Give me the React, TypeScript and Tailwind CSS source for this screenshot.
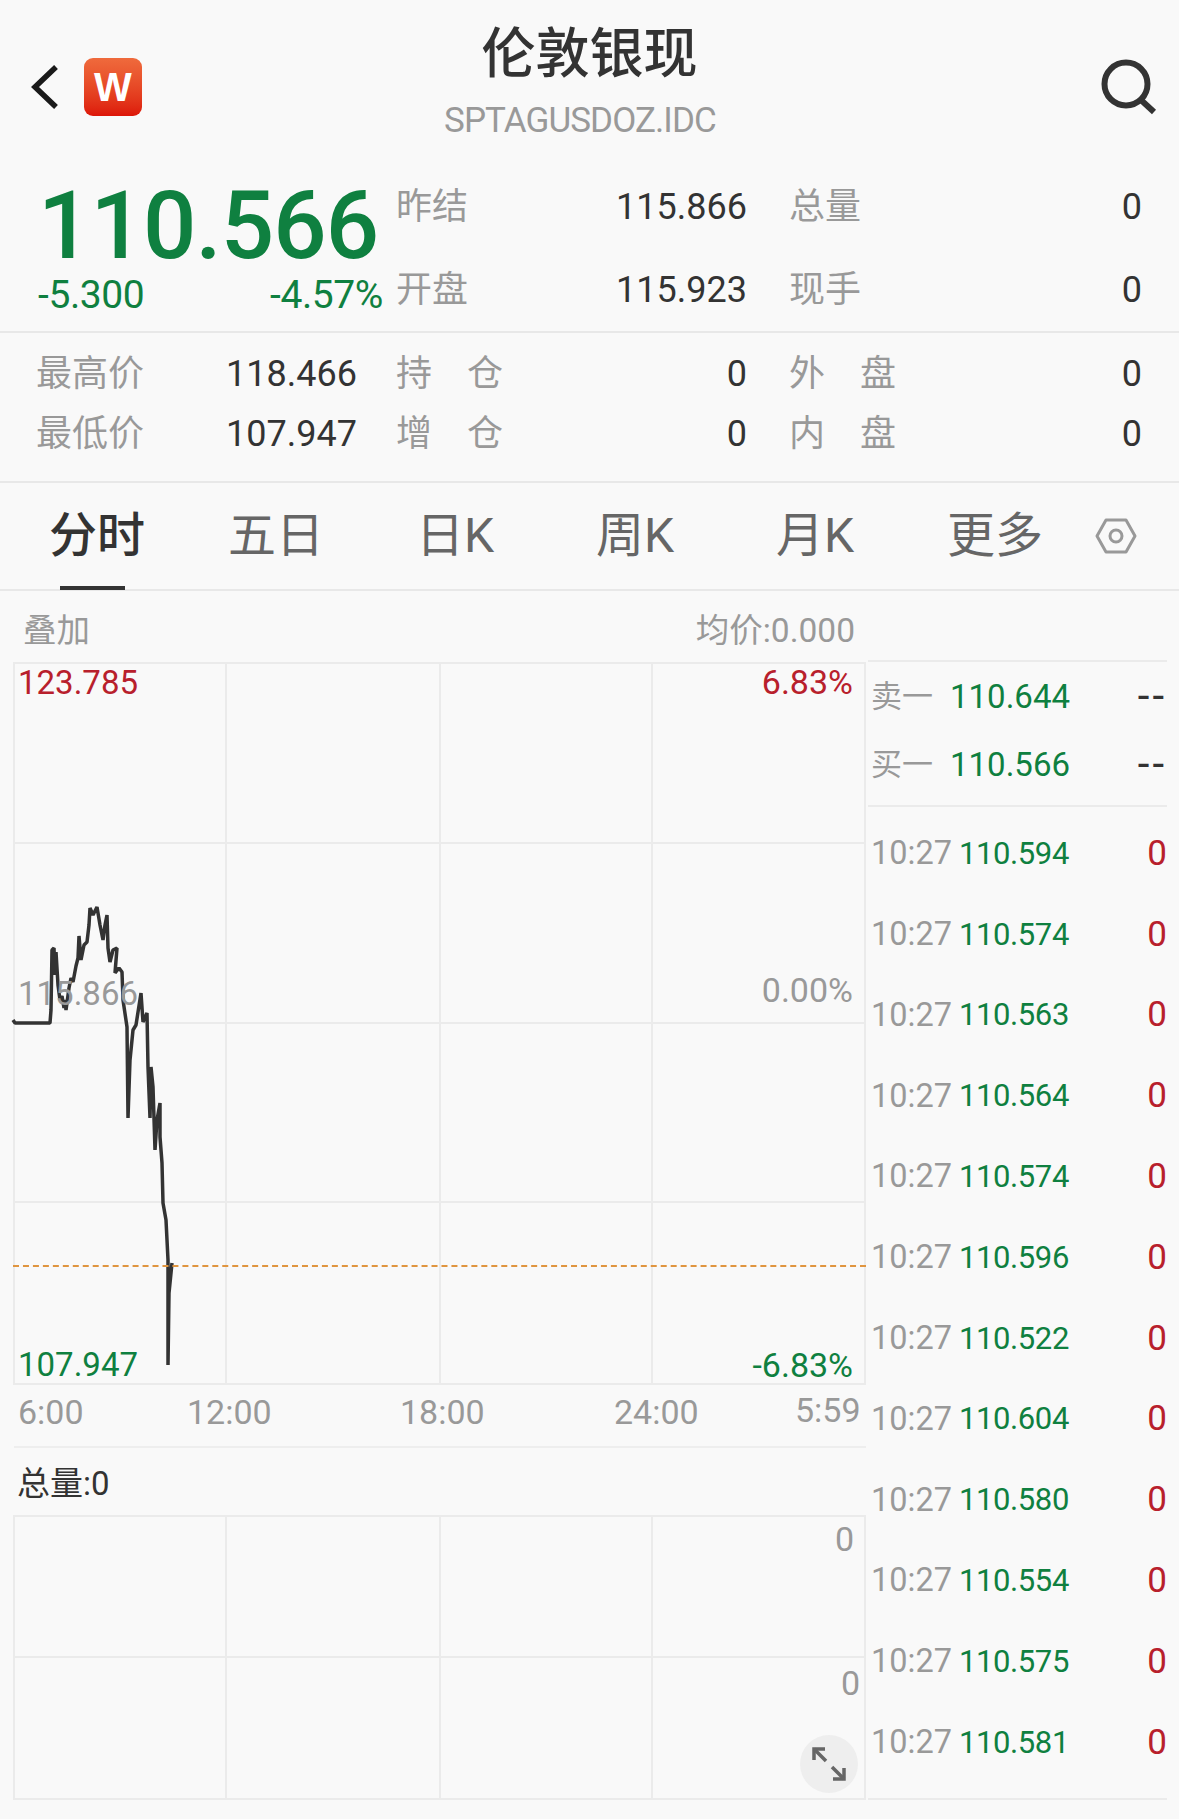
const GREEN = 'text-[#0f8040]';

const chartPoints =
  '13,1020 15,1023 50,1023 51,1010 52,950 54,948 55,975 56,952 58,985 60,1000 62,996 64,1008 65,1000 66,1010 69,988 71,978 73,982 76,966 78,958 79,936 81,960 84,945 87,942 89,925 90,908 93,915 97,907 100,925 103,940 105,925 107,915 108,948 110,962 113,950 117,948 115,973 119,968 122,972 123,1000 127,1027 128,1118 130,1060 133,1030 136,1025 141,993 143,1022 147,1013 148,1067 150,1118 151,1067 153,1087 155,1150 157,1120 160,1103 160,1137 162,1163 163,1203 166,1220 168,1260 168,1365 169,1293 172,1263';

const tradeRows = [
  '110.594', '110.574', '110.563', '110.564', '110.574', '110.596',
  '110.522', '110.604', '110.580', '110.554', '110.575', '110.581',
];

function Cell({ label, value, spaced }: { label: [string, string]; value: string; spaced?: boolean }) {
  return (
    <div className="flex items-center justify-between w-full">
      <span className={`flex text-[#999] text-[36px] ${spaced ? 'w-[107px] justify-between' : ''}`}>
        <span>{label[0]}</span>
        <span>{label[1]}</span>
      </span>
      <span className="text-[#333] text-[36px]">{value}</span>
    </div>
  );
}

function GridBox({ rows, className }: { rows: number; className: string }) {
  const cells = Array.from({ length: rows * 4 });
  return (
    <div
      className={`grid grid-cols-[212px_214px_212px_211px] border-2 border-[#ebebeb] ${rows === 4 ? 'grid-rows-4' : 'grid-rows-2'} ${className}`}
    >
      {cells.map((_, i) => (
        <div
          key={i}
          className={`${i % 4 !== 3 ? 'border-r-2' : ''} ${i < (rows - 1) * 4 ? 'border-b-2' : ''} border-[#ebebeb]`}
        />
      ))}
    </div>
  );
}

export default function App() {
  return (
    <div className="w-[1179px] h-[1819px] overflow-hidden bg-[#f9f9f9] font-['Roboto','Noto_Sans_CJK_SC',sans-serif] leading-none">
      {/* header */}
      <div className="relative h-[165px]">
        <svg className="absolute left-[29px] top-[62px]" width="32" height="50" viewBox="0 0 32 50" fill="none">
          <path d="M27 5 L6 25 L27 45" stroke="#1a1a1a" strokeWidth="5.5" />
        </svg>
        <div className="absolute left-[84px] top-[58px] w-[58px] h-[58px] rounded-[9px] bg-gradient-to-b from-[#ef6a3c] to-[#dd1508] flex items-center justify-center text-white text-[40px] font-bold font-['Liberation_Sans',sans-serif]">
          W
        </div>
        <div className="absolute left-0 right-0 top-[27px] text-center text-[#333] text-[54px] font-medium leading-[55px]">
          伦敦银现
        </div>
        <div className="absolute left-0 w-[1160px] top-[103px] text-center text-[#999] text-[35px] leading-[36px] tracking-[-0.9px]">
          SPTAGUSDOZ.IDC
        </div>
        <svg className="absolute left-[1099px] top-[57px]" width="60" height="60" viewBox="0 0 60 60" fill="none">
          <circle cx="27" cy="27" r="21.5" stroke="#333" strokeWidth="6" />
          <path d="M42 43 L55 55" stroke="#333" strokeWidth="6" />
        </svg>
      </div>

      {/* quote */}
      <div className="flex h-[168px] pl-[38px] border-b-2 border-[#e8e8e8]">
        <div className="w-[358px]">
          <div className={`mt-[13px] h-[96px] leading-[96px] text-[94px] font-medium tracking-[-0.9px] ${GREEN}`}>
            110.566
          </div>
          <div className={`flex justify-between pr-[13px] mt-[2px] text-[39px] tracking-[-0.4px] ${GREEN}`}>
            <span>-5.300</span>
            <span>-4.57%</span>
          </div>
        </div>
        <div className="flex flex-col w-[351px]">
          <div className="h-[84px] flex"><Cell label={['昨', '结']} value="115.866" /></div>
          <div className="h-[84px] flex"><Cell label={['开', '盘']} value="115.923" /></div>
        </div>
        <div className="flex flex-col w-[353px] ml-[42px]">
          <div className="h-[84px] flex"><Cell label={['总', '量']} value="0" /></div>
          <div className="h-[84px] flex"><Cell label={['现', '手']} value="0" /></div>
        </div>
      </div>

      <div className="flex h-[150px] pt-[11px] pl-[36px] border-b-2 border-[#e8e8e8]">
        <div className="flex flex-col w-[321px] mr-[39px]">
          <div className="h-[60px] flex"><Cell label={['最高', '价']} value="118.466" /></div>
          <div className="h-[60px] flex"><Cell label={['最低', '价']} value="107.947" /></div>
        </div>
        <div className="flex flex-col w-[351px]">
          <div className="h-[60px] flex"><Cell spaced label={['持', '仓']} value="0" /></div>
          <div className="h-[60px] flex"><Cell spaced label={['增', '仓']} value="0" /></div>
        </div>
        <div className="flex flex-col w-[353px] ml-[42px]">
          <div className="h-[60px] flex"><Cell spaced label={['外', '盘']} value="0" /></div>
          <div className="h-[60px] flex"><Cell spaced label={['内', '盘']} value="0" /></div>
        </div>
      </div>

      {/* tabs */}
      <div className="relative flex items-center h-[108px] border-b-2 border-[#e8e8e8] text-[48px] text-[#666]">
        <span className="ml-[49px] w-[179px] text-[#333] font-medium">分时</span>
        <span className="w-[188px]">五日</span>
        <span className="w-[180px]">日K</span>
        <span className="w-[180px]">周K</span>
        <span className="w-[171px]">月K</span>
        <span className="w-[148px]">更多</span>
        <svg width="42" height="40" viewBox="0 0 42 40" fill="none">
          <path d="M2 20 L11 4 H31 L40 20 L31 36 H11 Z" stroke="#999" strokeWidth="3" strokeLinejoin="round" />
          <circle cx="21" cy="20" r="6" stroke="#999" strokeWidth="3" />
        </svg>
        <div className="absolute left-[60px] bottom-[-1px] w-[65px] h-[4px] bg-[#333]" />
      </div>

      {/* body */}
      <div className="flex">
        <div className="w-[866px]">
          <div className="flex items-center justify-between h-[71px] pt-[8px] pl-[23px] pr-[11px] text-[33.5px] text-[#999]">
            <span>叠加</span>
            <span>均价:0.000</span>
          </div>
          <div className="relative ml-[13px] h-[723px]">
            <GridBox rows={4} className="h-full" />
            <svg className="absolute left-[-13px] top-[-662px]" width="200" height="1400" viewBox="0 0 200 1400" fill="none">
              <polyline points={chartPoints} stroke="#333" strokeWidth="3.5" strokeLinejoin="bevel" />
            </svg>
            <div className="absolute left-0 right-0 top-[603px] border-t-2 border-dashed border-[#e0953f]" />
            <span className="absolute left-[5px] top-[3px] text-[33px] leading-[36px] text-[#b8202c]">123.785</span>
            <span className="absolute right-[13px] top-[2px] text-[34px] leading-[36px] text-[#b8202c]">6.83%</span>
            <span className="absolute left-[5px] top-[314px] text-[33px] leading-[36px] text-[#999]">115.866</span>
            <span className="absolute right-[13px] top-[310px] text-[34px] leading-[36px] text-[#999]">0.00%</span>
            <span className={`absolute left-[5px] top-[685px] text-[33px] leading-[36px] ${GREEN}`}>107.947</span>
            <span className={`absolute right-[13px] top-[685px] text-[34px] leading-[36px] ${GREEN}`}>-6.83%</span>
          </div>
          <div className="relative h-[63px] ml-[14px] border-b-2 border-[#eee] text-[34px] text-[#999] leading-[36px]">
            <span className="absolute left-[4px] top-[9px]">6:00</span>
            <span className="absolute left-[173px] top-[9px]">12:00</span>
            <span className="absolute left-[386px] top-[9px]">18:00</span>
            <span className="absolute left-[600px] top-[9px]">24:00</span>
            <span className="absolute left-[781px] top-[7px]">5:59</span>
          </div>
          <div className="flex items-center h-[67px] pt-[3px] pl-[17px] text-[33px] text-[#333]">总量:0</div>
          <div className="relative ml-[13px] h-[285px]">
            <GridBox rows={2} className="h-full" />
            <span className="absolute right-[12px] top-[6px] text-[34px] leading-[36px] text-[#999]">0</span>
            <span className="absolute right-[6px] top-[150px] text-[34px] leading-[36px] text-[#999]">0</span>
            <div className="absolute left-[787px] top-[220px] w-[58px] h-[58px] rounded-full bg-[#eeeeee] flex items-center justify-center">
              <svg width="34" height="34" viewBox="0 0 34 34" fill="none" stroke="#666" strokeWidth="3.5">
                <path d="M2 13 V2 H13" />
                <path d="M2 2 L14 14" />
                <path d="M32 21 V32 H21" />
                <path d="M32 32 L20 20" />
              </svg>
            </div>
          </div>
        </div>

        <div className="w-[299px] ml-[2px] pt-[69px]">
          <div className="border-t-2 border-[#ebebeb]">
            {[
              ['卖一', '110.644'],
              ['买一', '110.566'],
            ].map(([label, price]) => (
              <div key={label} className="flex items-center h-[68px] pl-[3px]">
                <span className="w-[79px] text-[31px] text-[#999]">{label}</span>
                <span className={`w-[118px] text-[33px] ${GREEN}`}>{price}</span>
                <span className="flex-1 text-right text-[42px] tracking-[3px] text-[#333]">--</span>
              </div>
            ))}
          </div>
          <div className="mt-[7px] pt-[6px] border-t-2 border-[#ebebeb]">
            {tradeRows.map((price, i) => (
              <div key={i} className="flex items-center h-[80.8px] pl-[3px]">
                <span className="w-[88px] text-[32.5px] text-[#999]">10:27</span>
                <span className={`w-[108px] text-[31px] tracking-[-0.4px] ${GREEN}`}>{price}</span>
                <span className="flex-1 text-right text-[35px] text-[#b8202c]">0</span>
              </div>
            ))}
          </div>
          <div className="mt-[15px] border-t-2 border-[#ebebeb]" />
        </div>
      </div>
    </div>
  );
}
